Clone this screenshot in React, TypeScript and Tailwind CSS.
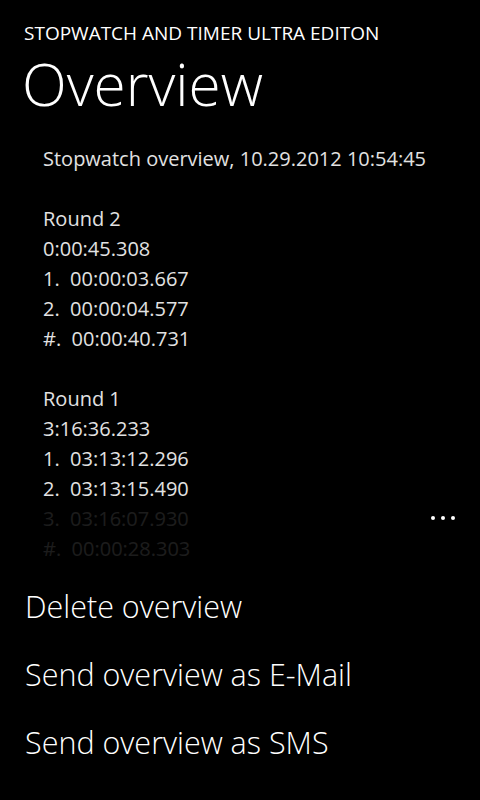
import React from "react";

const lines: { text: string; gap?: boolean }[] = [
  { text: "Stopwatch overview, 10.29.2012 10:54:45" },
  { text: "", gap: true },
  { text: "Round 2" },
  { text: "0:00:45.308" },
  { text: "1.  00:00:03.667" },
  { text: "2.  00:00:04.577" },
  { text: "#.  00:00:40.731" },
  { text: "", gap: true },
  { text: "Round 1" },
  { text: "3:16:36.233" },
  { text: "1.  03:13:12.296" },
  { text: "2.  03:13:15.490" },
  { text: "3.  03:16:07.930" },
  { text: "#.  00:00:28.303" },
];

const menu = ["Delete overview", "Send overview as E-Mail", "Send overview as SMS"];

export default function App() {
  // windows phone style page with the app bar menu opened over the overview text
  return (
    <div
      className="relative w-[480px] h-[800px] bg-black text-white overflow-hidden"
      style={{ fontFamily: '"Open Sans", "Noto Sans", sans-serif' }}
    >
      <div className="pl-6 pt-[20px]">
        <p className="text-[19px] leading-[26px] uppercase">Stopwatch and Timer Ultra Editon</p>
        <h1 className="text-[58.5px] leading-[64px] font-light -ml-[2px] mt-[5px]">Overview</h1>
      </div>

      <div className="pl-[43px] pt-[29px] text-[#e2e2e2] text-[20px] leading-[30px]">
        {lines.map((l, i) => (
          <p key={i} className="whitespace-pre h-[30px]">
            {l.gap ? "" : l.text}
          </p>
        ))}
      </div>

      <div className="absolute left-0 right-0 top-[503px] bottom-0 bg-black/[0.88]">
        <div className="flex justify-end gap-[6px] pr-[25px] pt-[13px]">
          <span className="w-1 h-1 rounded-full bg-white" />
          <span className="w-1 h-1 rounded-full bg-white" />
          <span className="w-1 h-1 rounded-full bg-white" />
        </div>
        <div className="pl-[25px] mt-[52px] flex flex-col">
          {menu.map((m) => (
            <p key={m} className="text-[30.5px] font-light leading-[68px] h-[68px]">
              {m}
            </p>
          ))}
        </div>
      </div>
    </div>
  );
}
